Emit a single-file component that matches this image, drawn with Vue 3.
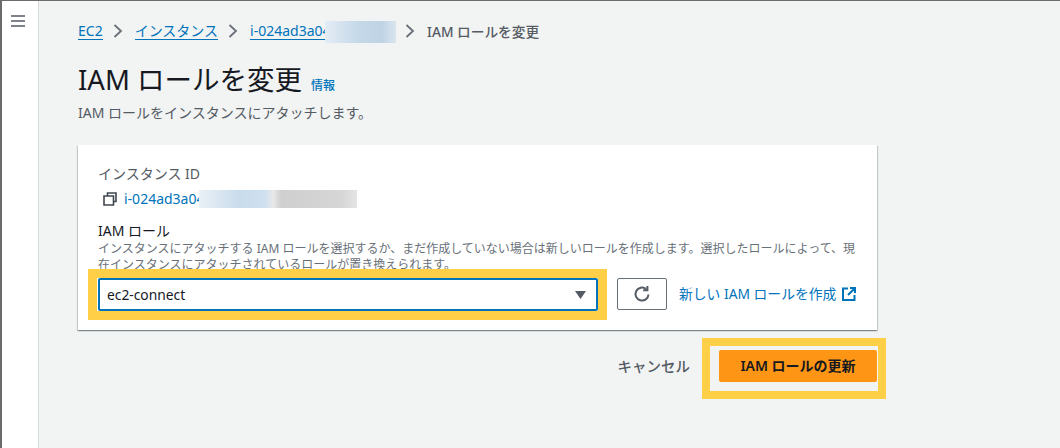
<script setup>
const crumbs = [
  { label: 'EC2' },
  { label: 'インスタンス' },
]
</script>

<template>
  <div class="page">
    <aside class="side">
      <svg class="menu" width="14" height="12" viewBox="0 0 14 12"><path d="M0 1h14M0 6h14M0 11h14" stroke="#545b64" stroke-width="1.6" fill="none"/></svg>
    </aside>
    <main class="main">
      <nav class="crumbs">
        <template v-for="c in crumbs" :key="c.label">
          <a class="crumb">{{ c.label }}</a>
          <svg class="chev" width="10" height="14" viewBox="0 0 10 14"><path d="M1.5 1l6.5 6-6.5 6" stroke="#687078" stroke-width="1.8" fill="none"/></svg>
        </template>
        <span class="idcrumb"><a class="crumb">i-024ad3a04</a><span class="blur blur-a"></span></span>
        <svg class="chev last" width="10" height="14" viewBox="0 0 10 14"><path d="M1.5 1l6.5 6-6.5 6" stroke="#687078" stroke-width="1.8" fill="none"/></svg>
        <span class="current">IAM ロールを変更</span>
      </nav>
      <div class="title-row">
        <h1>IAM ロールを変更</h1>
        <a class="info">情報</a>
      </div>
      <p class="sub">IAM ロールをインスタンスにアタッチします。</p>

      <section class="card">
        <div class="label">インスタンス ID</div>
        <div class="idrow">
          <svg width="14" height="14" viewBox="0 0 14 14"><path d="M4.5 3.5V1h8.5v8.5h-2.5M1 4h9.5v9H1z" stroke="#414750" stroke-width="1.6" fill="none"/></svg>
          <span class="idwrap"><a class="idval">i-024ad3a04</a><span class="blur blur-b"></span></span>
        </div>
        <div class="label role">IAM ロール</div>
        <p class="desc">インスタンスにアタッチする IAM ロールを選択するか、まだ作成していない場合は新しいロールを作成します。選択したロールによって、現在インスタンスにアタッチされているロールが置き換えられます。</p>
        <div class="controls">
          <div class="select">
            <span>ec2-connect</span>
            <svg width="11" height="8" viewBox="0 0 11 8"><path d="M0 0h11L5.5 8z" fill="#545b64"/></svg>
          </div>
          <button class="refresh">
            <svg width="18" height="18" viewBox="0 0 18 18"><path d="M15.5 9.5a6.5 6.5 0 1 1-2.4-5.5" stroke="#545b64" stroke-width="2" fill="none"/><path d="M14.4 1v4.2h-4.2" stroke="#545b64" stroke-width="2" fill="none"/></svg>
          </button>
          <a class="create">新しい IAM ロールを作成</a>
          <svg class="ext" width="14" height="14" viewBox="0 0 14 14"><path d="M6 1.5H1v11.5h11.5V8M8 1h5v5M13 1L6 8" stroke="#0073bb" stroke-width="2" fill="none"/></svg>
        </div>
      </section>

      <div class="actions">
        <a class="cancel">キャンセル</a>
        <button class="primary">IAM ロールの更新</button>
      </div>

      <div class="hl hl-select"></div>
      <div class="hl hl-button"></div>
    </main>
  </div>
</template>

<style scoped>
.page {
  width: 1060px;
  height: 448px;
  box-sizing: border-box;
  display: flex;
  position: relative;
  overflow: hidden;
  border-top: 1px solid #6b6b6b;
  border-left: 2px solid #6b6b6b;
  background: #f2f3f3;
  font-family: "Noto Sans", "Noto Sans CJK JP", sans-serif;
  color: #16191f;
}
.side {
  width: 37px;
  flex: none;
  background: #fff;
  border-right: 1px solid #d5dbdb;
  padding: 14px 0 0 9px;
  box-sizing: border-box;
}
.menu { display: block; }
.main {
  flex: 1;
  padding: 20px 0 0 39px;
  min-width: 0;
}
.crumbs {
  display: flex;
  align-items: center;
  height: 20px;
  font-size: 14px;
  white-space: nowrap;
}
.crumb {
  color: #0073bb;
  border-bottom: 1px solid #0073bb;
  line-height: 17px;
}
.chev { margin: 0 12px 0 10px; flex: none; }
.chev.last { margin: 0 12px 0 9px; }
.idcrumb { display: flex; align-items: center; position: relative; width: 146px; }
.blur { display: block; position: absolute; }
.blur-a {
  left: 75px;
  top: -1px;
  width: 71px;
  height: 22px;
  background: linear-gradient(90deg, #e3ecf4 0, #c6d9e9 45%, #bfd3e5 80%, #d9e5ef 100%);
}
.current { color: #545b64; font-size: 13.7px; font-weight: 500; }
.title-row {
  display: flex;
  align-items: baseline;
  margin-top: 21px;
}
h1 {
  margin: 0;
  font-size: 27.5px;
  font-weight: 400;
  line-height: 36px;
}
.info { color: #0073bb; font-size: 12px; margin-left: 9px; font-weight: 500; }
.sub {
  margin: 6px 0 0;
  font-size: 14px;
  line-height: 18px;
  color: #545b64;
}
.card {
  width: 799px;
  height: 185px;
  box-sizing: border-box;
  margin-top: 23px;
  background: #fff;
  box-shadow: 0 1px 1px 0 rgba(0, 28, 36, 0.3), 1px 1px 1px 0 rgba(0, 28, 36, 0.15), -1px 1px 1px 0 rgba(0, 28, 36, 0.15);
  padding: 20px 19px 0 20px;
}
.label { font-size: 14px; line-height: 18px; color: #545b64; }
.idrow {
  display: flex;
  align-items: center;
  height: 20px;
  margin-top: 6px;
  padding-left: 5px;
  font-size: 14px;
}
.idwrap { position: relative; margin-left: 7px; width: 233px; height: 20px; line-height: 20px; white-space: nowrap; }
.idval { color: #0073bb; }
.blur-b {
  left: 75px;
  top: 1px;
  width: 158px;
  height: 18px;
  background: linear-gradient(90deg, #eaf1f7 0, #c9dcec 25%, #cfe0ef 42%, #e8e8e8 47%, #cfcfcf 52%, #d6d6d6 90%, #e4e4e4 100%);
}
.role { margin-top: 13px; color: #16191f; }
.desc {
  margin: 1px 0 0;
  font-size: 12px;
  line-height: 16px;
  color: #687078;
  width: 760px;
}
.controls {
  display: flex;
  align-items: flex-start;
  margin-top: 5px;
}
.select {
  width: 500px;
  height: 33px;
  box-sizing: border-box;
  border: 2px solid #0073bb;
  border-radius: 2px;
  background: #fff;
  display: flex;
  align-items: center;
  justify-content: space-between;
  padding: 0 10px 0 7px;
  font-size: 13.8px;
  color: #16191f;
}
.refresh {
  width: 50px;
  height: 32px;
  margin: 0 0 0 19px;
  border: 1px solid #687078;
  border-radius: 2px;
  background: #fff;
  display: flex;
  align-items: center;
  justify-content: center;
  padding: 0;
}
.create { margin: 6px 0 0 12px; color: #0073bb; font-size: 13.8px; line-height: 20px; white-space: nowrap; }
.ext { margin: 9px 0 0 6px; }
.actions {
  width: 799px;
  display: flex;
  justify-content: flex-end;
  align-items: center;
  margin-top: 20px;
}
.cancel { font-size: 14.5px; font-weight: 500; color: #545b64; margin: 0 29px 2px 0; }
.primary {
  width: 158px;
  height: 32px;
  border: none;
  border-radius: 2px;
  background: #ff9514;
  color: #16191f;
  padding: 0 0 2px;
  font: 600 14px "Noto Sans", "Noto Sans CJK JP", sans-serif;
}
.hl {
  position: absolute;
  box-sizing: border-box;
  border: 9px solid #ffcf47;
  pointer-events: none;
}
.hl-select { left: 86px; top: 268px; width: 519px; height: 51px; }
.hl-button { left: 700px; top: 337px; width: 184px; height: 61px; border-width: 8px; }
</style>
